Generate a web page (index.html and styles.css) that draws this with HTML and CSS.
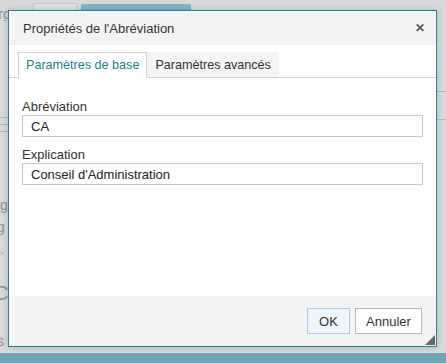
FILE: index.html
```html
<!DOCTYPE html>
<html>
<head lang="fr">
    <meta charset="UTF-8">
    <title>Propriétés de l'Abréviation</title>
    <link rel="stylesheet" href="styles.css">
</head>
<body>
<div class="page">
    <div class="topstrip">
        <span class="crumb">rg</span>
        <span class="tabghost"></span>
        <span class="tabbar"></span>
    </div>
    <div class="middle">
        <div class="leftcol">
            <div class="lines"><i></i><i></i><i></i></div>
            <p class="first">ig</p>
            <p>g</p>
            <p class="red">i.</p>
            <p class="big">C</p>
            <p class="small">s</p>
        </div>
        <div class="rightcol">
            <div class="lines"><i></i><i></i></div>
        </div>
    </div>
    <div class="bottombar"></div>
</div>

<div class="dialog">
    <div class="dialog-title">
        <span>Propriétés de l'Abréviation</span>
        <a href="javascript:;" class="close">&#x2715;</a>
    </div>
    <div class="dialog-body">
        <ul class="tabs">
            <li class="active"><a href="javascript:;">Paramètres de base</a></li>
            <li><a href="javascript:;">Paramètres avancés</a></li>
        </ul>
        <div class="form">
            <label>Abréviation</label>
            <input type="text" value="CA">
            <label>Explication</label>
            <input type="text" value="Conseil d'Administration">
        </div>
    </div>
    <div class="dialog-footer">
        <button class="ok">OK</button>
        <button class="cancel">Annuler</button>
        <span class="grip"></span>
    </div>
</div>
</body>
</html>
```
FILE: styles.css
```css
* {
    margin: 0;
    padding: 0;
}

body {
    font-size: 13px;
    font-family: "Liberation Sans", Arial, sans-serif;
    background-color: #d6d8dc;
    width: 446px;
    height: 363px;
    overflow: hidden;
    position: relative;
}

.page {
    height: 363px;
    display: flex;
    flex-direction: column;
}

.topstrip {
    height: 11px;
    display: flex;
    align-items: flex-start;
    gap: 4px;
}

.topstrip .crumb {
    color: #8a8d92;
    font-size: 15px;
    line-height: 15px;
    margin-top: 6px;
    width: 29px;
    overflow: hidden;
    text-indent: -2px;
}

.topstrip .tabghost {
    margin-top: 3px;
    width: 42px;
    height: 8px;
    border: 1px solid #c3c6cb;
    border-bottom: none;
    background-color: #dfe1e4;
}

.topstrip .tabbar {
    margin-top: 4px;
    width: 110px;
    height: 7px;
    background-color: #86b2c5;
}

.middle {
    flex: 1;
    display: flex;
    justify-content: space-between;
}

.leftcol {
    width: 8px;
    overflow: hidden;
    color: #8d9095;
    font-size: 14px;
    padding-top: 106px;
}

.lines i {
    display: block;
    height: 1px;
    width: 8px;
    background-color: #b5b8bd;
    margin-bottom: 6px;
}

.leftcol p {
    line-height: 22px;
    text-indent: -3px;
    white-space: nowrap;
}

.leftcol .first {
    margin-top: 62px;
}

.leftcol .red {
    color: #b78888;
}

.leftcol .big {
    font-size: 20px;
    margin-top: 22px;
    text-indent: -6px;
}

.leftcol .small {
    margin-top: 26px;
}

.rightcol {
    width: 9px;
    padding-top: 80px;
}

.rightcol .lines i {
    width: 9px;
    margin-bottom: 27px;
}

.bottombar {
    height: 10px;
    background-color: #6fa4b4;
}

.dialog {
    position: absolute;
    left: 8px;
    top: 10px;
    width: 427px;
    height: 335px;
    border: 1px solid #26819a;
    background-color: #fff;
    box-shadow: 0 0 6px rgba(0, 0, 0, 0.18);
    display: flex;
    flex-direction: column;
}

.dialog-title {
    height: 34px;
    background-color: #f3f3f3;
    color: #333;
    display: flex;
    align-items: center;
    justify-content: space-between;
    padding: 0 11px 0 14px;
}

.dialog-title .close {
    color: #555;
    font-size: 12px;
    font-weight: bold;
    text-decoration: none;
}

.dialog-body {
    flex: 1;
    padding-top: 7px;
}

.tabs {
    list-style: none;
    display: flex;
    padding-left: 9px;
    border-bottom: 1px solid #d3d3d3;
}

.tabs li a {
    display: block;
    height: 24px;
    line-height: 24px;
    padding: 0 7px 0 7px;
    color: #333;
    font-size: 12.6px;
    background-color: #f4f4f4;
    text-decoration: none;
    border: 1px solid transparent;
    border-bottom: none;
    margin-bottom: -1px;
}

.tabs li.active a {
    background-color: #fff;
    color: #1f7a94;
    border-color: #d3d3d3;
    height: 25px;
}

.form {
    padding: 21px 13px 0 13px;
    display: flex;
    flex-direction: column;
}

.form label {
    color: #333;
    line-height: 15px;
    margin-bottom: 1px;
}

.form input {
    height: 22px;
    border: 1px solid #c8c8c8;
    padding: 0 8px;
    font-size: 13px;
    font-family: "Liberation Sans", Arial, sans-serif;
    color: #222;
    outline: none;
    box-sizing: border-box;
    margin-bottom: 10px;
}

.dialog-footer {
    height: 50px;
    background-color: #f3f3f3;
    display: flex;
    justify-content: flex-end;
    align-items: flex-start;
    gap: 5px;
    padding: 12px 14px 0 0;
    box-sizing: border-box;
    position: relative;
}

.dialog-footer button {
    height: 26px;
    font-size: 13px;
    font-family: "Liberation Sans", Arial, sans-serif;
    color: #333;
    background-color: #fff;
    border: 1px solid #b8b8b8;
}

.dialog-footer button.ok {
    width: 43px;
    background-color: #edf5fa;
    border-color: #a7cbe0;
}

.dialog-footer button.cancel {
    width: 67px;
}

.dialog-footer .grip {
    position: absolute;
    right: 1px;
    bottom: 1px;
    width: 0;
    height: 0;
    border-left: 10px solid transparent;
    border-bottom: 10px solid #666;
}
```
